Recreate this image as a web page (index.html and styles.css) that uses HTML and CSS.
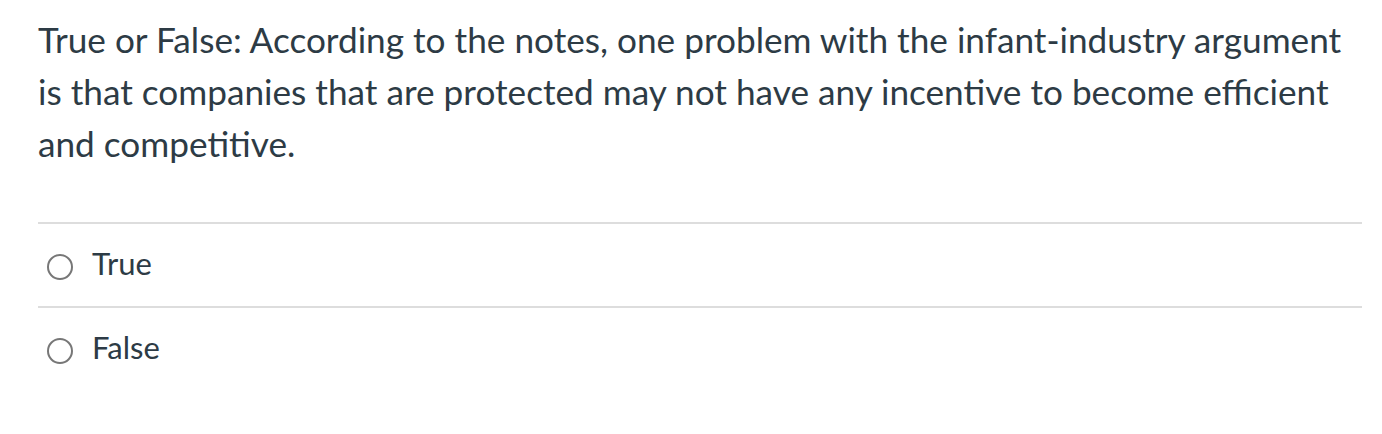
FILE: index.html
```html
<!DOCTYPE html>
<html>
<head>
<meta charset="utf-8">
<link rel="stylesheet" href="styles.css">
</head>
<body>
<div class="question">
  <p class="prompt">True or False: According to the notes, one problem with the infant-industry argument is that companies that are protected may not have any incentive to become efficient and competitive.</p>
  <div class="answers">
    <label class="answer"><span class="radio"></span><span class="label">True</span></label>
    <label class="answer"><span class="radio"></span><span class="label">False</span></label>
  </div>
</div>
</body>
</html>
```
FILE: styles.css
```css
html, body { margin: 0; padding: 0; background: #fff; }
body { font-family: Lato, "Open Sans", sans-serif; color: #2d3b45; }
.question { padding: 13px 20px 0 38px; }
.prompt { margin: 0; font-size: 35.2px; line-height: 52px; }
.answers { margin-top: 53px; }
.answer { display: flex; align-items: center; border-top: 2px solid #ddd; height: 82px; font-size: 31px; }
.radio { width: 26px; height: 26px; border: 2px solid #777; border-radius: 50%; margin: 4px 19px 0 9px; box-sizing: border-box; flex: none; }
.label { margin-top: -4px; }
```
